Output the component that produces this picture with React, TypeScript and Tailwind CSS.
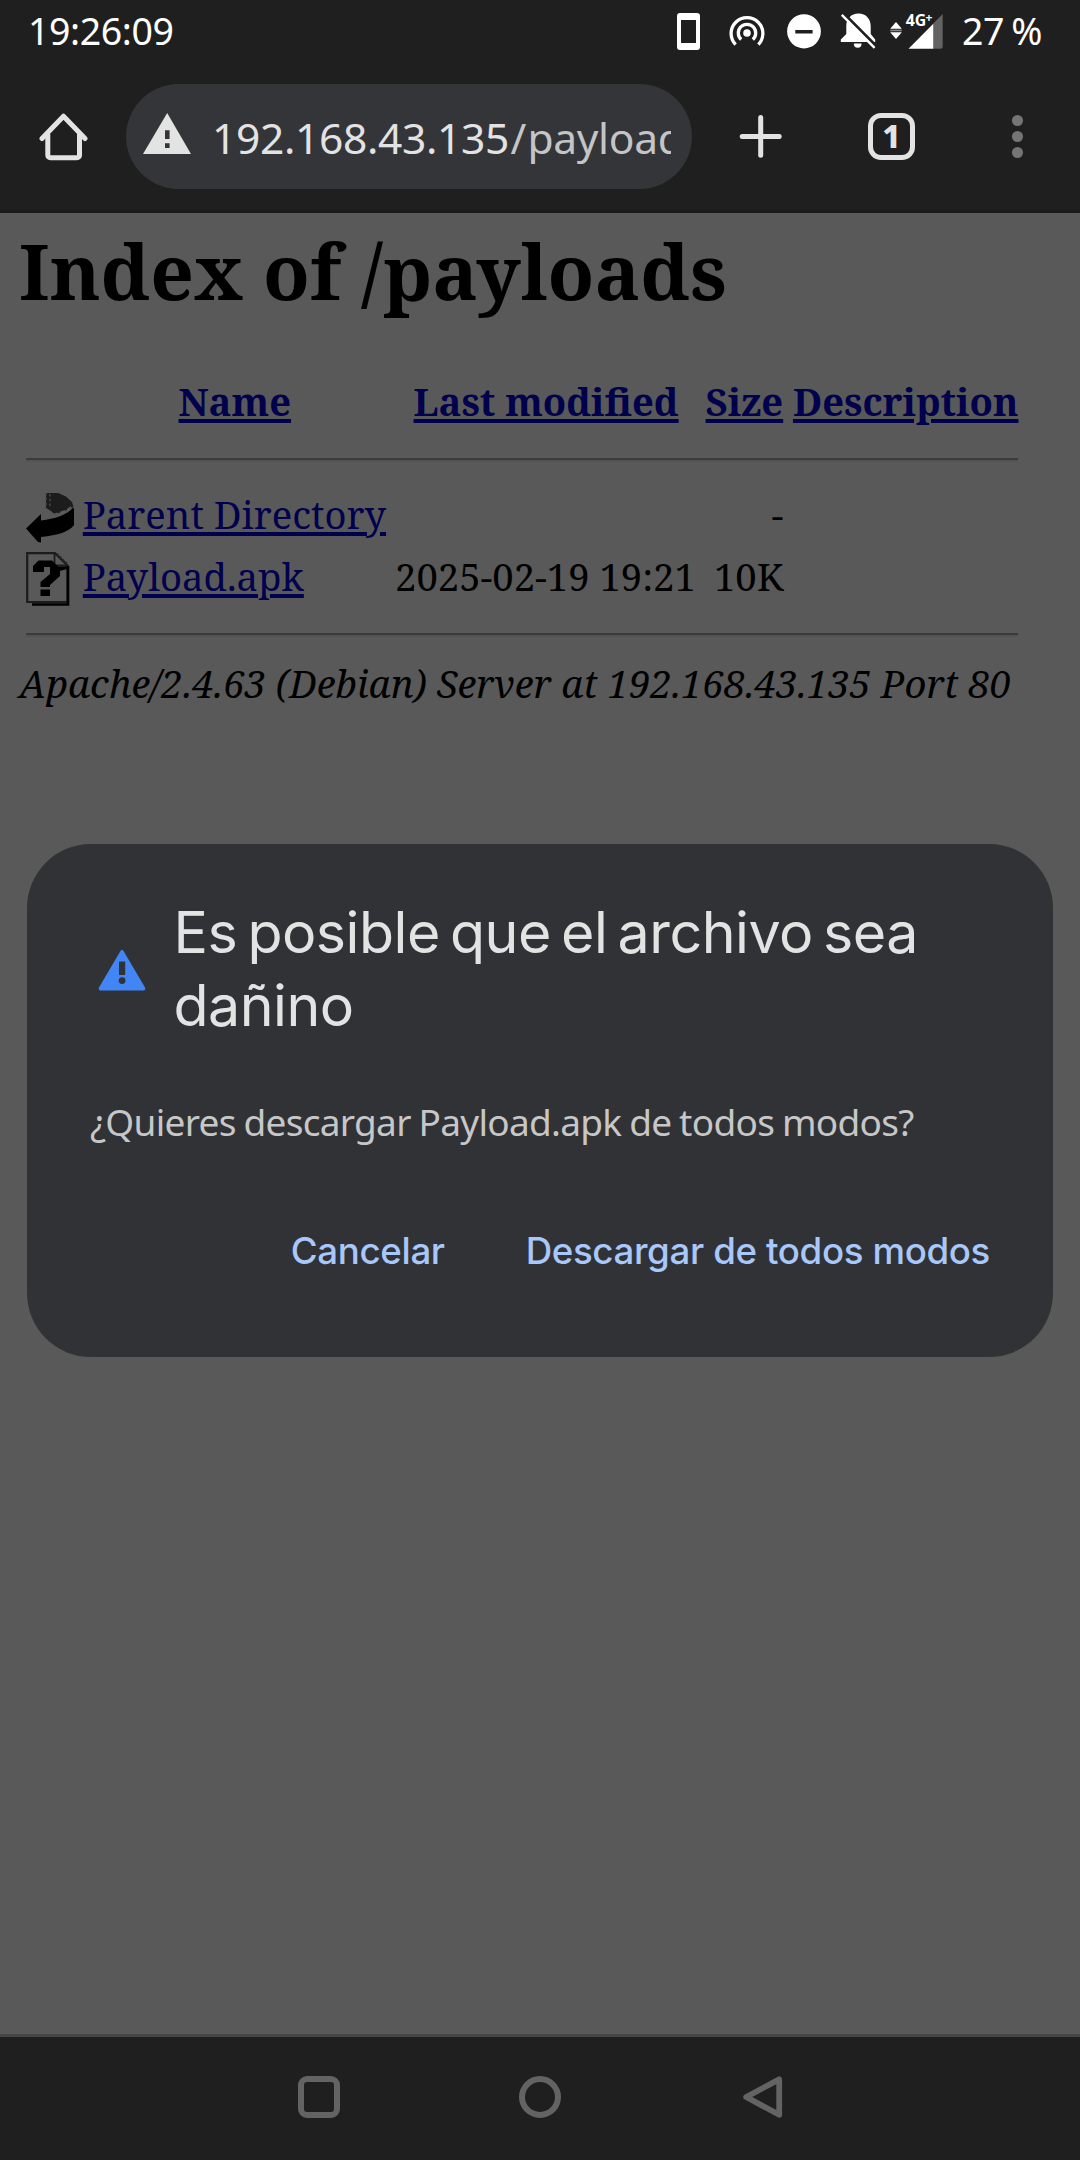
import React from 'react';

function StatusBar() {
  return (
    <div className="flex h-16 items-start pl-[28px] text-white">
      <span className="mt-1 w-[649px] font-['Noto_Sans',sans-serif] text-[37.5px] leading-[54px] tracking-[-0.4px]">
        19:26:09
      </span>
      {/* Phone */}
      <svg className="mt-[13px] h-[37px] w-[23px]" viewBox="0 0 23 37" fill="currentColor">
        <path fillRule="evenodd" d="M3 0H20A3 3 0 0 1 23 3V34A3 3 0 0 1 20 37H3A3 3 0 0 1 0 34V3A3 3 0 0 1 3 0ZM4 7V30H19V7Z" />
      </svg>
      {/* Hotspot */}
      <svg className="mt-[15px] ml-[29px] h-[31px] w-[36px]" viewBox="0 0 36 31" fill="none" stroke="currentColor" strokeWidth="3.3">
        <circle cx="18" cy="18" r="3.8" fill="currentColor" stroke="none" />
        <path d="M12.2 24.5A8.7 8.7 0 1 1 23.8 24.5" />
        <path d="M6.6 29.6A15.9 15.9 0 1 1 29.4 29.6" />
      </svg>
      {/* Do not disturb */}
      <svg className="mt-[14px] ml-[22px] h-[35px] w-[34px]" viewBox="0 0 34 35" fill="currentColor">
        <path fillRule="evenodd" d="M17 0.2A16.9 17.1 0 0 1 17 34.4A16.9 17.1 0 0 1 17 0.2ZM8.3 16V19.4H25.6V16Z" />
      </svg>
      {/* Muted bell */}
      <svg className="mt-[13px] ml-[19px] h-[36px] w-[36px]" viewBox="0 0 36 36" fill="currentColor">
        <path d="M18.5 0.5C11 0.5 6.3 6 6.3 13V21L0.8 26.5V29H35.2V26.5L30.7 21V13C30.7 6 26 0.5 18.5 0.5Z" />
        <path d="M13.8 30.5H21.6A3.9 4.2 0 0 1 13.8 30.5Z" />
        <path d="M3.2 0L36 33" stroke="#1f1f1f" strokeWidth="3" />
        <path d="M1.8 1.8L34.6 34.8" stroke="currentColor" strokeWidth="2.4" />
      </svg>
      {/* Mobile data */}
      <svg className="mt-[13px] ml-[14px] h-[37px] w-[54px]" viewBox="0 0 54 37" fill="currentColor">
        <path d="M6 9L11.8 15.7H0.2Z" />
        <path d="M0.2 16.6H11.8V18.3H0.2Z" opacity="0.45" />
        <path d="M6 26L11.8 19.3H0.2Z" />
        <path d="M43.3 35.7V10.5L52.7 1V33.7A2 2 0 0 1 50.7 35.7Z" fill="#636363" />
        <path d="M18.5 35.7L43.3 10.8V35.7Z" />
        <text x="15.8" y="13" fontSize="15.8" fontWeight="700" fontFamily="Noto Sans, sans-serif">4G</text>
        <text x="35.6" y="9" fontSize="12" fontWeight="700" fontFamily="Noto Sans, sans-serif">+</text>
      </svg>
      <span className="mt-1 ml-[18px] font-['Noto_Sans',sans-serif] text-[37.5px] leading-[54px] tracking-[-0.5px] [word-spacing:-2px]">
        27 %
      </span>
    </div>
  );
}

function Toolbar() {
  return (
    <div className="flex h-[149px] items-start border-b-[3px] border-[#1a1a1a] pl-[39px] text-[#e3e3e3]">
      <svg className="mt-[48px] h-[50px] w-[49px]" viewBox="0 0 49 50" fill="none" stroke="currentColor" strokeWidth="5" strokeLinejoin="round">
        <path d="M3 26.5L24.5 4.2L46 26.5" strokeLinecap="round" />
        <path d="M8.8 22V43.3A2.5 2.5 0 0 0 11.3 45.8H38A2.5 2.5 0 0 0 40.5 43.3V22" />
      </svg>
      <div className="mt-[20px] ml-[38px] flex h-[105px] w-[566px] rounded-full bg-[#343539] pl-[17px]">
        <svg className="mt-[29px] h-[41px] w-[48px] shrink-0" viewBox="0 0 48 41" fill="currentColor">
          <path fillRule="evenodd" d="M24.2 0L48 41H0ZM22 17.2V26H26.6V17.2ZM22 30.3V35H26.6V30.3Z" />
        </svg>
        <div className="ml-[21px] h-full w-[459px] overflow-hidden font-['Noto_Sans',sans-serif] text-[42.5px] leading-[108px] tracking-[-0.33px] whitespace-nowrap">
          192.168.43.135<span className="text-[#c4c5c6]"><span className="mx-[1.5px]">/</span>payloads/</span>
        </div>
      </div>
      <svg className="mt-[50px] ml-[47px] h-[44px] w-[43px]" viewBox="0 0 43 44" stroke="currentColor" strokeWidth="5" strokeLinecap="round">
        <path d="M21.7 3.6V41.2M3.2 22.4H40.2" />
      </svg>
      <div className="mt-[49px] ml-[86px] flex h-[47px] w-[47px] items-center justify-center rounded-[13px] border-[5px] border-[#e3e3e3] font-['Noto_Sans',sans-serif] text-[32px] leading-none font-extrabold">
        <span className="-mt-0.5">1</span>
      </div>
      <div className="mt-[51px] ml-[97px] flex flex-col gap-[5.5px]">
        <i className="size-[10.5px] rounded-full bg-[#757575]" />
        <i className="size-[10.5px] rounded-full bg-[#757575]" />
        <i className="size-[10.5px] rounded-full bg-[#757575]" />
      </div>
    </div>
  );
}

function BackIcon() {
  return (
    <svg className="h-[53px] w-[48px]" viewBox="0 0 48 53">
      <path d="M20 2H32L40 5.5L46 11L47.5 16L43 18L38 20L33 22L29 24L25 20L20 17Z" fill="#1c1c1c" />
      <path d="M20 2V18M24 3V17" stroke="#4a4a4a" strokeWidth="1.4" strokeDasharray="2.4 2.4" />
      <path d="M27 23.5C34 22 42 19 45.5 15.5" stroke="#5c5c5c" strokeWidth="1.6" strokeDasharray="5 2.4" fill="none" />
      <path d="M0 37.5L15 23V29.5C29 28 42 23.5 47 16.5L48 18V34C43 41 32 44 15 46V51.5L12 51Z" fill="#000" />
    </svg>
  );
}

function UnknownIcon() {
  return (
    <svg className="h-[54px] w-[48px]" viewBox="0 0 48 54" fill="none">
      <path d="M1.2 50V1.2H29L41.5 13.5V50Z" stroke="#1c1c1c" strokeWidth="2.2" />
      <path d="M6 52.5H42V14" stroke="#000" strokeWidth="2.6" />
      <path d="M28.5 2V13.5H41" stroke="#1c1c1c" strokeWidth="1.8" />
      <path d="M31 2L41.5 12.5" stroke="#262626" strokeWidth="2" strokeDasharray="2.4 1.4" />
      <path d="M7 14L12.5 8.5H26L32 14.5H41V17L34 19V24L24 33V35H14.5V30L24 22V15H18V20H7Z" fill="#000" />
      <path d="M14.5 37.5H24V44H14.5Z" fill="#000" />
    </svg>
  );
}

function Rule() {
  return <div className="h-[4px] border-t-2 border-b-2 border-t-[#3b3b3b] border-b-[#525252]" />;
}

const link = "text-[#00004d] underline decoration-[3.8px] underline-offset-[3px]";

function Listing() {
  return (
    <main className="h-[1824px] border-b-[3px] border-[#454545] bg-[#595959] pt-[5px] pl-[19px] font-['Noto_Serif',serif] text-[38.2px] leading-[62px] text-black">
      <h1 className="text-[76.4px] leading-[104px] font-bold whitespace-nowrap">Index of /payloads</h1>
      <div className="mt-[48px] ml-[7px] w-[992px]">
        <div className="grid grid-cols-[47.5px_304px_300px_78px_226px] gap-x-[9.3px] text-center font-bold whitespace-nowrap">
          <span />
          <span><a className={link}>Name</a></span>
          <span><a className={link}>Last modified</a></span>
          <span><a className={link}>Size</a></span>
          <span><a className={link}>Description</a></span>
        </div>
        <div className="pt-[26px] pb-[20.5px]"><Rule /></div>
        <div className="grid grid-cols-[47.5px_304px_300px_78px_226px] gap-x-[9.3px] whitespace-nowrap">
          <div className="pt-[8px]"><BackIcon /></div>
          <span><a className={link}>Parent Directory</a></span>
          <span />
          <span className="text-right">-</span>
          <span />
          <div className="pt-[7.5px]"><UnknownIcon /></div>
          <span><a className={link}>Payload.apk</a></span>
          <span className="-ml-px">2025-02-19 19:21</span>
          <span className="flex justify-end">10K</span>
          <span />
        </div>
        <div className="pt-[26px]"><Rule /></div>
      </div>
      <address className="mt-[20px] leading-[52px] whitespace-nowrap">
        Apache/2.4.63 (Debian) Server at 192.168.43.135 Port 80
      </address>
    </main>
  );
}

function DownloadDialog() {
  return (
    <div className="absolute top-[844px] left-[27px] h-[513px] w-[1026px] rounded-[64px] bg-[#313236]">
      <div className="flex pt-[52px] pl-[71px]">
        <svg className="mt-[54px] h-[41px] w-[48px]" viewBox="0 0 48 41">
          <path fillRule="evenodd" fill="#4285f4" d="M22.6 0.8Q24 -1 25.4 0.8L47 37.6Q48 40.4 45.6 40.6H2.4Q0 40.4 1 37.6ZM21 11.4V25H27.2V11.4ZM24.1 27.2A3.4 3.4 0 0 0 24.1 34A3.4 3.4 0 0 0 24.1 27.2Z" />
        </svg>
        <h2 className="ml-[27.5px] font-['Inter',sans-serif] text-[57.3px] leading-[73.4px] tracking-[-0.5px] [word-spacing:-5.4px] whitespace-nowrap text-[#e3e3e3]">
          Es posible que el archivo sea<br />dañino
        </h2>
      </div>
      <p className="mt-[53px] pl-[63px] font-['Noto_Sans',sans-serif] text-[37px] leading-[52px] tracking-[-0.7px] [word-spacing:-1.2px] whitespace-nowrap text-[#c7c7c7]">
        ¿Quieres descargar Payload.apk de todos modos?
      </p>
      <div className="mt-[75px] flex justify-end gap-[81px] pr-[63px] font-['Inter',sans-serif] text-[36.7px] leading-[56px] font-medium whitespace-nowrap text-[#a8c7fa]">
        <button className="tracking-[-0.37px]">Cancelar</button>
        <button className="tracking-[-0.37px]">Descargar de todos modos</button>
      </div>
    </div>
  );
}

function NavBar() {
  return (
    <nav className="flex h-[123px] items-start pt-[38px] pl-[297px]">
      <svg className="h-[44px] w-[44px]" viewBox="0 0 44 44" fill="none" stroke="#636363" strokeWidth="6">
        <rect x="4" y="4" width="36" height="36" rx="6" />
      </svg>
      <svg className="ml-[177px] h-[44px] w-[44px]" viewBox="0 0 44 44" fill="none" stroke="#636363" strokeWidth="6">
        <circle cx="22" cy="22" r="18" />
      </svg>
      <svg className="ml-[180px] h-[44px] w-[41px]" viewBox="0 0 41 44" fill="none" stroke="#636363" strokeWidth="5.8" strokeLinejoin="round">
        <path d="M37.2 4.4V39.8L4.2 22Z" />
      </svg>
    </nav>
  );
}

export default function App() {
  return (
    <div className="relative h-[2160px] w-[1080px] overflow-hidden bg-[#1f1f1f]">
      <StatusBar />
      <Toolbar />
      <Listing />
      <NavBar />
      <DownloadDialog />
    </div>
  );
}
